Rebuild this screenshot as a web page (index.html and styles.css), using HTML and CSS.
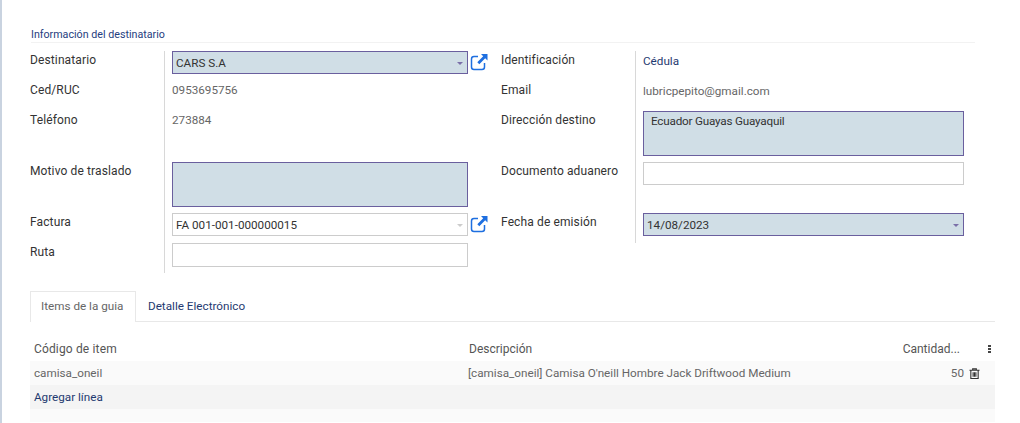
FILE: index.html
```html
<!DOCTYPE html>
<html lang="es">
<head>
  <meta charset="UTF-8" />
  <title>Guía de remisión</title>
  <link rel="stylesheet" href="styles.css">
</head>
<body>
  <div class="sheet">
    <h3 class="section-title">Información del destinatario</h3>

    <div class="groups">
      <div class="group group-left">
        <div class="lbl">Destinatario</div>
        <div class="val">
          <div class="select required"><span>CARS S.A</span><i class="caret"></i></div>
          <svg class="ext" viewBox="0 0 18 18"><path d="M8 3.500H4A2.500 2.500 0 0 0 1.500 6v8A2.500 2.500 0 0 0 4 16.500h8a2.500 2.500 0 0 0 2.500-2.500V10"/><path class="arrow" d="M11 1H17.500V7.500L15.200 5.300 9.300 11.200 7.300 9.200 13.200 3.300Z"/></svg>
        </div>

        <div class="lbl">Ced/RUC</div>
        <div class="val"><span class="plain">0953695756</span></div>

        <div class="lbl">Teléfono</div>
        <div class="val val-tall"><span class="plain">273884</span></div>

        <div class="lbl">Motivo de traslado</div>
        <div class="val val-tall"><textarea class="area required"></textarea></div>

        <div class="lbl">Factura</div>
        <div class="val">
          <div class="select"><span>FA 001-001-000000015</span><i class="caret"></i></div>
          <svg class="ext" viewBox="0 0 18 18"><path d="M8 3.500H4A2.500 2.500 0 0 0 1.500 6v8A2.500 2.500 0 0 0 4 16.500h8a2.500 2.500 0 0 0 2.500-2.500V10"/><path class="arrow" d="M11 1H17.500V7.500L15.200 5.300 9.300 11.200 7.300 9.200 13.200 3.300Z"/></svg>
        </div>

        <div class="lbl">Ruta</div>
        <div class="val"><input class="input" type="text"></div>
      </div>

      <div class="group group-right">
        <div class="lbl">Identificación</div>
        <div class="val"><span class="plain link">Cédula</span></div>

        <div class="lbl">Email</div>
        <div class="val"><span class="plain">lubricpepito@gmail.com</span></div>

        <div class="lbl">Dirección destino</div>
        <div class="val val-tall"><textarea class="area required addr">Ecuador Guayas Guayaquil</textarea></div>

        <div class="lbl">Documento aduanero</div>
        <div class="val val-tall"><input class="input" type="text"></div>

        <div class="lbl">Fecha de emisión</div>
        <div class="val">
          <div class="select required"><span>14/08/2023</span><i class="caret"></i></div>
        </div>
      </div>
    </div>

    <div class="tabs">
      <div class="tab active">Items de la guia</div>
      <div class="tab">Detalle Electrónico</div>
    </div>

    <table class="lines">
      <thead>
        <tr>
          <th class="col-code">Código de item</th>
          <th class="col-desc">Descripción</th>
          <th class="col-qty">Cantidad...</th>
          <th class="col-act"><span class="dots"><i></i><i></i><i></i></span></th>
        </tr>
      </thead>
      <tbody>
        <tr class="row-light">
          <td>camisa_oneil</td>
          <td>[camisa_oneil] Camisa O'neill Hombre Jack Driftwood Medium</td>
          <td class="col-qty">50</td>
          <td class="col-act">
            <svg class="trash" viewBox="0 0 12 12"><path d="M.5 2.500h11M4 2.500V1h4v1.500M2 2.500V11.500H10V2.500M4.500 4.500V9.500M6 4.500V9.500M7.500 4.500V9.500"/></svg>
          </td>
        </tr>
        <tr class="row-dark">
          <td colspan="4"><span class="link">Agregar línea</span></td>
        </tr>
        <tr class="row-light row-empty">
          <td colspan="4"></td>
        </tr>
      </tbody>
    </table>
  </div>
</body>
</html>
```

FILE: styles.css
```css
html, body {
  margin: 0;
  height: 423px;
  overflow: hidden;
  background: #fff;
}
body {
  font-family: Roboto, "Liberation Sans", sans-serif;
  font-size: 11.7px;
  color: #666;
  border-left: 2px solid #c9d3e0;
}
.sheet {
  padding: 26px 25px 0 28px;
}
.section-title {
  margin: 0 20px 0 1px;
  height: 16px;
  line-height: 17px;
  font-size: 10.7px;
  font-weight: 400;
  color: #1f4080;
  border-bottom: 1px solid #f2f2f2;
}
.groups {
  display: flex;
  margin-top: 8px;
}
.group {
  display: grid;
  grid-template-columns: 134px 1fr;
  grid-template-rows: 30px 30px 51px 51px 30px 30px;
  align-self: flex-start;
}
.group-left {
  width: 458px;
  margin-right: 13px;
}
.group-right {
  width: 463px;
  grid-template-columns: 134px 1fr;
  grid-template-rows: 30px 30px 51px 51px 30px;
}
.lbl {
  padding-top: 2px;
  line-height: 15px;
  font-size: 12px;
  letter-spacing: 0.12px;
  color: #333;
}
.val {
  display: flex;
  align-items: flex-start;
  border-left: 1px solid #d8d8d8;
  padding-left: 7px;
}
.plain {
  padding-top: 2px;
  line-height: 15px;
}
.group-right .plain {
  padding-top: 3px;
}
.link {
  color: #1f3a70;
}
.select, .input, .area {
  box-sizing: border-box;
  display: block;
  width: 296px;
  margin: 0;
  border: 1px solid #ccc;
  border-radius: 0;
  background: #fff;
  font: inherit;
  color: #333;
  outline: none;
  resize: none;
}
.group-right .select, .group-right .input, .group-right .area {
  width: 321px;
}
.select {
  position: relative;
  height: 23px;
  padding: 3px 3px;
  line-height: 16px;
}
.input {
  height: 24px;
  padding: 2px 3px;
}
.group-right .input {
  height: 23px;
}
.area {
  height: 45px;
  padding: 2px 7px;
  line-height: 15px;
  letter-spacing: -0.2px;
  overflow: hidden;
}
.required {
  background: #d0dee6;
  border-color: #6a5f9e;
}
.caret {
  position: absolute;
  right: 4px;
  top: 10px;
  border: 3px solid transparent;
  border-top-color: #ccc;
  border-bottom: 0;
}
.required .caret {
  border-top-color: #7a6fa8;
}
.ext {
  width: 18px;
  height: 18px;
  margin: 2px 0 0 2px;
  fill: none;
  stroke: #1e6fe0;
  stroke-width: 1.5;
}
.ext .arrow {
  fill: #1e6fe0;
  stroke: none;
}
.tabs {
  display: flex;
  margin-top: 18px;
  height: 30px;
  border-bottom: 1px solid #e8e8e8;
}
.tab {
  padding: 0 11px;
  line-height: 28px;
  white-space: nowrap;
  color: #1f3a70;
  border: 1px solid transparent;
  border-bottom: 0;
  height: 30px;
}
.tab.active {
  color: #666;
  background: #fff;
  border-color: #e8e8e8;
  height: 31px;
  box-sizing: border-box;
  width: 106px;
  padding: 0 10px;
}
.lines {
  width: 965px;
  margin-top: 15px;
  border-collapse: collapse;
  table-layout: fixed;
}
.lines th, .lines td {
  padding: 0 4px;
  text-align: left;
  font-weight: 400;
  line-height: 15px;
  white-space: nowrap;
}
.lines th {
  height: 24px;
  font-size: 12px;
  color: #555;
}
.lines td {
  height: 24px;
}
.lines .col-code {
  width: 426px;
  letter-spacing: 0.15px;
}
.lines .col-desc {
  padding-left: 5px;
}
.lines .col-qty {
  width: 80px;
  text-align: right;
  padding-right: 0;
}
.lines th.col-qty {
  padding-right: 4px;
}
.lines .col-act {
  width: 31px;
  padding: 0;
}
.row-light {
  background: #fafafa;
}
.row-dark {
  background: #f4f4f4;
}
.lines .row-empty td {
  height: 13px;
}
.dots {
  display: inline-flex;
  flex-direction: column;
  gap: 1px;
  margin-left: 24px;
  vertical-align: middle;
}
.dots i {
  display: block;
  width: 3px;
  height: 2px;
  background: #444;
}
.trash {
  display: block;
  width: 11px;
  height: 11px;
  margin-left: 5px;
  fill: none;
  stroke: #333;
  stroke-width: 1.2;
}
```
